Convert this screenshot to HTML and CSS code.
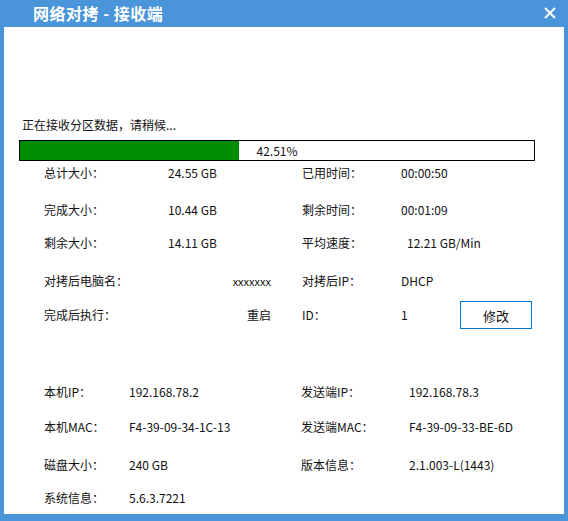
FILE: index.html
```html
<!DOCTYPE html>
<html lang="zh-CN">
<head>
<meta charset="utf-8">
<title>网络对拷 - 接收端</title>
<link rel="stylesheet" href="styles.css">
</head>
<body>
<div class="window">
  <div class="titlebar">
    <span class="title">网络对拷 - 接收端</span>
    <svg class="close" width="12" height="12" viewBox="0 0 12 12">
      <path d="M1 1 L11 11 M11 1 L1 11" stroke="#fff" stroke-width="2" fill="none"/>
    </svg>
  </div>
  <div class="content">
    <div class="status">正在接收分区数据，请稍候...</div>
    <div class="bar">
      <div class="fill" style="width: 42.51%"></div>
      <span class="pct">42.51%</span>
    </div>
    <div class="stats">
      <span class="lbl">总计大小：</span><span class="val">24.55 GB</span>
      <span class="lbl">已用时间：</span><span class="val2">00:00:50</span><span></span>

      <span class="lbl">完成大小：</span><span class="val">10.44 GB</span>
      <span class="lbl">剩余时间：</span><span class="val2">00:01:09</span><span></span>

      <span class="lbl">剩余大小：</span><span class="val">14.11 GB</span>
      <span class="lbl">平均速度：</span><span class="val2 shift">12.21 GB/Min</span><span></span>

      <span class="lbl">对拷后电脑名：</span><span class="val right small">xxxxxxx</span>
      <span class="lbl">对拷后IP：</span><span class="val2">DHCP</span><span></span>

      <span class="lbl">完成后执行：</span><span class="val right">重启</span>
      <span class="lbl">ID：</span><span class="val2">1</span><button class="btn">修改</button>
    </div>
    <div class="info">
      <span class="lbl">本机IP：</span><span class="val">192.168.78.2</span>
      <span class="lbl">发送端IP：</span><span class="val">192.168.78.3</span>

      <span class="lbl">本机MAC：</span><span class="val">F4-39-09-34-1C-13</span>
      <span class="lbl">发送端MAC：</span><span class="val">F4-39-09-33-BE-6D</span>

      <span class="lbl">磁盘大小：</span><span class="val">240 GB</span>
      <span class="lbl">版本信息：</span><span class="val">2.1.003-L(1443)</span>

      <span class="lbl">系统信息：</span><span class="val">5.6.3.7221</span>
      <span></span><span></span>
    </div>
  </div>
</div>
</body>
</html>
```

FILE: styles.css
```css
* { box-sizing: border-box; }
html, body { margin: 0; padding: 0; }
body {
  font-family: "Noto Sans CJK SC", "Noto Sans", sans-serif;
  font-size: 12px;
  color: #111;
  background: #fff;
}
.window {
  width: 568px;
  height: 521px;
  background: #4a94d9;
  display: flex;
  flex-direction: column;
}
.titlebar {
  height: 27px;
  display: flex;
  align-items: center;
  justify-content: space-between;
  padding: 0 12px 1px 33px;
}
.title {
  color: #fff;
  font-weight: bold;
  font-size: 16px;
  letter-spacing: 0.5px;
  line-height: 20px;
}
.close { display: block; }
.content {
  flex: 1;
  margin: 0 4px 7px 4px;
  background: #fff;
  padding: 90px 0 0 0;
  display: flex;
  flex-direction: column;
}
.status {
  line-height: 16px;
  padding-left: 18px;
}
.bar {
  margin: 7px 0 0 15px;
  width: 516px;
  height: 21px;
  border: 1px solid #000;
  position: relative;
  display: flex;
  align-items: center;
  justify-content: center;
}
.fill {
  position: absolute;
  left: 0;
  top: 0;
  bottom: 0;
  background: #008c00;
}
.pct { position: relative; line-height: 16px; }
.stats {
  margin-top: 4px;
  padding-left: 40px;
  display: grid;
  grid-template-columns: 124px 134px 99px 59px 72px;
  grid-template-rows: 37px 33px 38px 34px 16px;
  align-items: start;
  line-height: 16px;
  white-space: nowrap;
}
.stats .right { text-align: right; padding-right: 31px; }
.stats .small { font-size: 11px; }
.shift { padding-left: 6px; }
.btn {
  margin-top: -6px;
  height: 28px;
  width: 72px;
  background: #fff;
  border: 1px solid #0078d7;
  font-family: inherit;
  font-size: 13px;
  color: #111;
  padding: 0;
}
.info {
  margin-top: 61px;
  padding-left: 40px;
  display: grid;
  grid-template-columns: 85px 172px 108px auto;
  grid-template-rows: 35px 38px 33px 16px;
  line-height: 16px;
  white-space: nowrap;
}
```
